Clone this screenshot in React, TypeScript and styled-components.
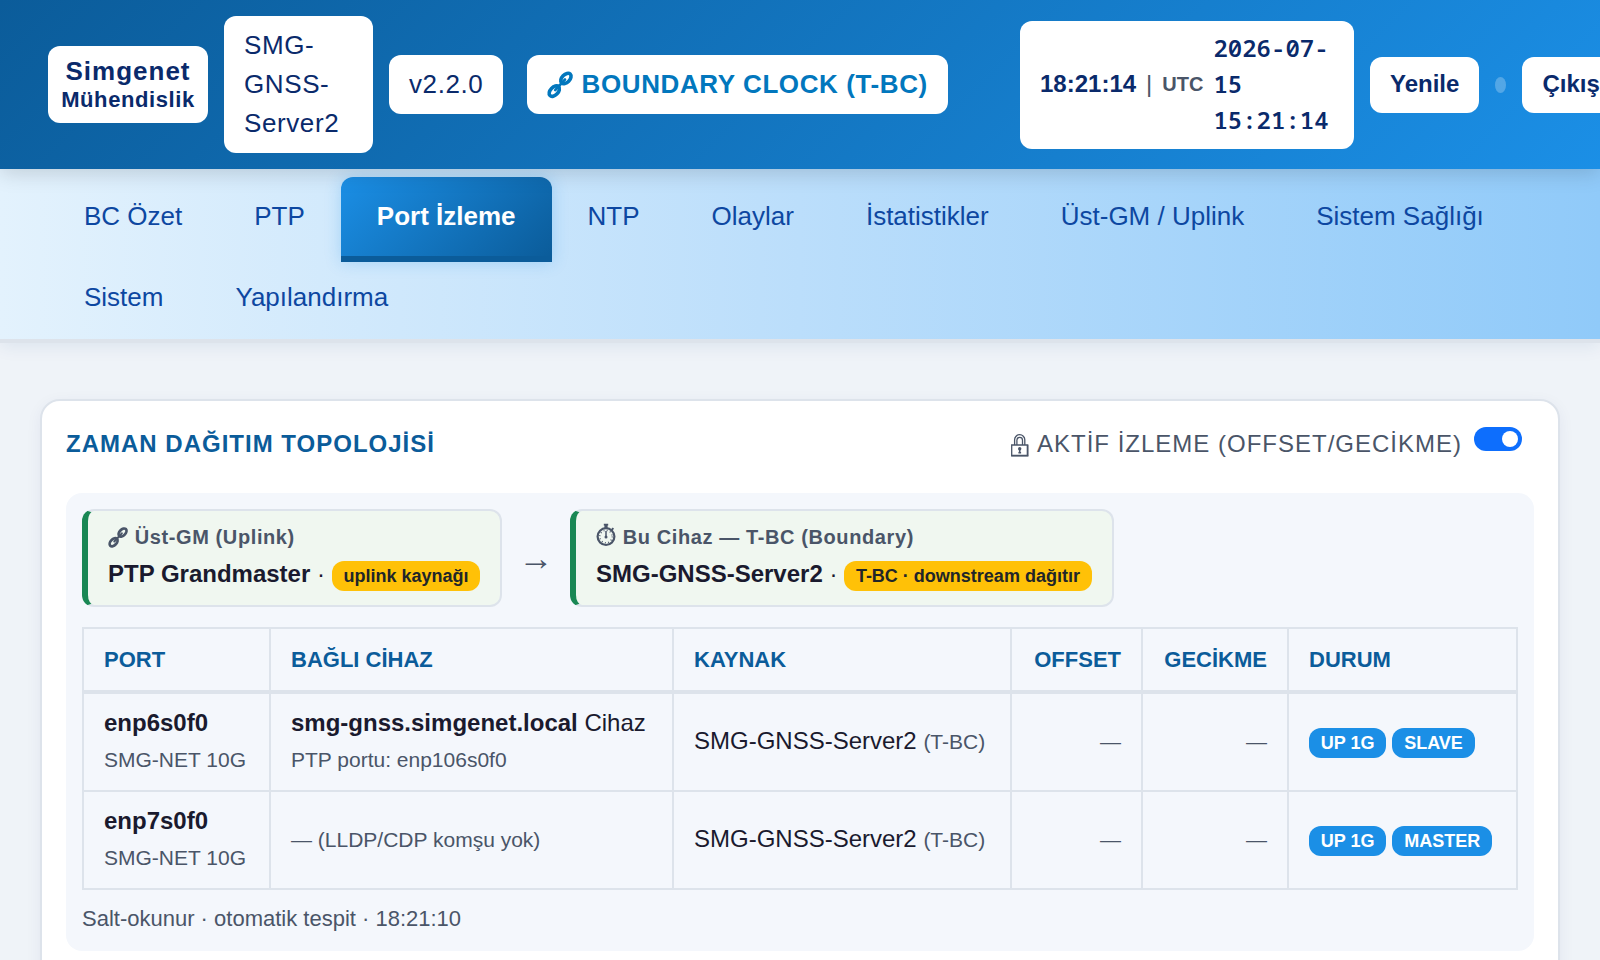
import React from "react";
import styled, { createGlobalStyle, css } from "styled-components";

const Global = createGlobalStyle`
  *, *::before, *::after { box-sizing: border-box; }
  html, body { margin: 0; overflow: hidden; }
  body {
    background: #eff3f8;
    color: #1a1a2e;
    font-family: "Liberation Sans", Arial, sans-serif;
    font-size: 24px;
    line-height: 1.5;
    width: 1600px;
    height: 960px;
  }
`;

const Page = styled.div`
  width: 1600px;
  height: 960px;
  overflow: hidden;
`;

const Header = styled.header`
  position: relative;
  z-index: 2;
  display: flex;
  align-items: center;
  height: 169px;
  padding: 16px 48px;
  background: linear-gradient(135deg, #0b5c9a 0%, #1b8fe6 100%);
  box-shadow: 0 4px 20px rgba(0, 0, 0, 0.15);
`;

const Pill = styled.div<{ $w?: number; $ml?: number; $small?: boolean; $wrap?: boolean }>`
  flex: none;
  width: ${(p) => (p.$w ? `${p.$w}px` : "auto")};
  margin-left: ${(p) => p.$ml ?? 16}px;
  padding: ${(p) => (p.$small ? "9px 20px 11px" : "10px 20px")};
  border-radius: 12px;
  background: #fff;
  color: #0a2a6b;
  font-size: ${(p) => (p.$small ? 24 : 26)}px;
  font-weight: ${(p) => (p.$small ? 700 : 400)};
  letter-spacing: ${(p) => (p.$small ? 0 : 0.6)}px;
  white-space: ${(p) => (p.$wrap ? "normal" : "nowrap")};
`;

const Brand = styled.div`
  flex: none;
  width: 160px;
  height: 77px;
  padding: 11px 0 0;
  border-radius: 12px;
  background: #fff;
  color: #0a2a6b;
  font-weight: 700;
  letter-spacing: 1px;
  text-align: center;
  line-height: 29px;
  font-size: 26px;
`;

const BrandSub = styled.div`
  font-size: 22px;
  line-height: 27px;
  letter-spacing: 0.6px;
`;

const Mode = styled(Pill)`
  color: #0277bd;
  font-weight: 700;
`;

const Clock = styled(Pill)`
  display: flex;
  align-items: center;
`;

const Divider = styled.span`
  margin: 0 10px;
  font-weight: 400;
  color: #4a5568;
`;

const Zone = styled.span`
  margin-right: 10px;
  font-size: 20px;
  color: #4a5568;
`;

const Stamp = styled.span`
  font-family: "Noto Sans Mono", "Liberation Mono", monospace;
  font-weight: 600;
`;

const StatusDot = styled.span`
  flex: none;
  width: 11px;
  height: 16px;
  margin-left: 16px;
  border-radius: 50%;
  background: rgba(255, 255, 255, 0.25);
`;

const Nav = styled.nav`
  position: relative;
  z-index: 1;
  display: flex;
  flex-wrap: wrap;
  height: 174px;
  padding: 8px 48px 0;
  border-bottom: 4px solid #dde3eb;
  background: linear-gradient(90deg, #e3f2fd 0%, #bbdefb 50%, #90caf9 100%);
  background-clip: padding-box;
  box-shadow: 0 4px 16px rgba(10, 60, 130, 0.08);
`;

const Tab = styled.a<{ $active?: boolean }>`
  height: 85px;
  margin-bottom: -4px;
  padding: 20px 36px;
  border-bottom: 6px solid transparent;
  border-radius: 12px 12px 0 0;
  color: #0d47a1;
  font-size: 26px;
  white-space: nowrap;
  ${(p) =>
    p.$active &&
    css`
      background: linear-gradient(135deg, #1b8fe6 0%, #0b5c9a 100%);
      border-bottom-color: #0b5c9a;
      color: #fff;
      font-weight: 700;
      box-shadow: 0 0 16px rgba(27, 143, 230, 0.25);
    `}
`;

const Card = styled.section`
  height: 640px;
  margin: 56px 40px 0;
  padding: 24px;
  border: 2px solid #dde3eb;
  border-radius: 20px;
  background: #fff;
  box-shadow: 0 4px 16px rgba(10, 40, 100, 0.06);
`;

const CardHead = styled.div`
  display: flex;
  justify-content: space-between;
  height: 36px;
  margin-bottom: 32px;
  padding: 1px 12px 0 0;
  letter-spacing: 1px;
`;

const Title = styled.h2`
  margin: 0;
  color: #0b5c9a;
  font-size: 24px;
  font-weight: 700;
`;

const Monitor = styled.label`
  display: flex;
  color: #4a5568;
`;

const Switch = styled.span`
  display: flex;
  justify-content: flex-end;
  width: 48px;
  height: 24px;
  margin: 1px 0 0 12px;
  padding: 4px;
  border-radius: 12px;
  background: #0d6efd;

  &::after {
    content: "";
    width: 16px;
    height: 16px;
    border-radius: 50%;
    background: #fff;
  }
`;

const Panel = styled.div`
  height: 458px;
  padding: 16px;
  border-radius: 16px;
  background: #f4f7fc;
`;

const Chain = styled.div`
  display: flex;
  align-items: center;
  height: 98px;
  margin-bottom: 20px;
`;

const Node = styled.div<{ $w: number }>`
  width: ${(p) => p.$w}px;
  height: 98px;
  padding: 11px 20px;
  border: 2px solid #dde3eb;
  border-left: 6px solid #198754;
  border-radius: 12px;
  background: #f0f7f0;
  white-space: nowrap;
`;

const NodeLabel = styled.div`
  height: 30px;
  margin-bottom: 4px;
  color: #4a5568;
  font-size: 20px;
  font-weight: 700;
  letter-spacing: 0.6px;
`;

const Arrow = styled.div`
  width: 68px;
  text-align: center;
  color: #4a5568;
  font-size: 35px;
`;

const Badge = styled.span<{ $warn?: boolean }>`
  display: inline-block;
  margin-right: -0.6px;
  padding: 6px 11.8px;
  border-radius: 12px;
  background: ${(p) => (p.$warn ? "#ffc107" : "#1b8fe6")};
  color: ${(p) => (p.$warn ? "#212529" : "#fff")};
  font-size: 18px;
  font-weight: 700;
  line-height: 18px;
`;

const Table = styled.table`
  width: 1436px;
  border-collapse: collapse;
  table-layout: fixed;
`;

const Th = styled.th<{ $w: number; $right?: boolean }>`
  width: ${(p) => p.$w}px;
  padding: 14px 20px;
  border: 2px solid #dde3eb;
  border-bottom-width: 4px;
  color: #0b5c9a;
  font-size: 22px;
  text-align: ${(p) => (p.$right ? "right" : "left")};
`;

const Td = styled.td<{ $right?: boolean }>`
  padding: 11px 20px 13px;
  border: 2px solid #dde3eb;
  text-align: ${(p) => (p.$right ? "right" : "left")};
  vertical-align: middle;
  white-space: nowrap;
`;

const Muted = styled.small`
  color: #4a5568;
  font-size: 21px;
`;

const Foot = styled.div`
  margin-top: 12px;
  color: #4a5568;
  font-size: 22px;
`;

const Glyph = styled.svg<{ $drop?: number }>`
  width: 1em;
  height: 1.1em;
  margin: 0 0.03em ${(p) => -(p.$drop ?? 0.2)}em 0;
  vertical-align: baseline;
  overflow: visible;
`;

const LockGlyph = styled(Glyph)`
  width: 20px;
  height: 24px;
  margin: 7px 7px 0 0;
`;

const ChainIcon = () => (
  <Glyph viewBox="0 0 26 28" fill="none" stroke="currentColor" strokeWidth="3.6" strokeLinecap="round">
    <ellipse cx="7.3" cy="20.8" rx="6.2" ry="3.9" transform="rotate(-46 7.3 20.8)" />
    <ellipse cx="18.9" cy="8.2" rx="6.2" ry="3.9" transform="rotate(-46 18.9 8.2)" />
    <path d="M8.2 19.8 18 9.2" strokeWidth="2.6" />
  </Glyph>
);

const StopwatchIcon = () => (
  <Glyph viewBox="0 0 20 22" fill="none" stroke="currentColor" $drop={0.12}>
    <circle cx="10" cy="12.6" r="8.4" strokeWidth="2.2" />
    <circle cx="10" cy="12.6" r="6.2" strokeWidth="1.4" strokeDasharray="0.9 2.346" />
    <path d="M10 7v6" strokeWidth="1.5" />
    <circle cx="10" cy="13" r="1.5" fill="currentColor" stroke="none" />
    <path d="M10 4V1" strokeWidth="3.2" />
    <path d="M7.8 .7h4.4M15.6 6l1.8-1.8" strokeWidth="1.8" />
  </Glyph>
);

const LockIcon = () => (
  <LockGlyph viewBox="0 0 20 24" fill="none" stroke="currentColor">
    <path d="M4.6 12V6.8a5.1 5.1 0 0 1 10.2 0V12" strokeWidth="1.3" />
    <path d="M6.9 12V7.2a2.8 2.8 0 0 1 5.6 0V12" strokeWidth="1.3" />
    <path d="M1.7 12h16v10.5h-16z" strokeWidth="1.3" />
    <path d="M1.2 22.7h17.2M17.5 12v11" strokeWidth="1.6" />
    <circle cx="9.7" cy="15.8" r="1.7" fill="currentColor" stroke="none" />
    <path d="M9.7 16v3.9M8.4 19.8h2.7" strokeWidth="1.6" />
  </LockGlyph>
);

const tabs = [
  "BC Özet",
  "PTP",
  "Port İzleme",
  "NTP",
  "Olaylar",
  "İstatistikler",
  "Üst-GM / Uplink",
  "Sistem Sağlığı",
  "Sistem",
  "Yapılandırma",
];

const ports = [
  { port: "enp6s0f0", peer: "smg-gnss.simgenet.local", note: "PTP portu: enp106s0f0", role: "SLAVE" },
  { port: "enp7s0f0", peer: "", note: "— (LLDP/CDP komşu yok)", role: "MASTER" },
];

export default function App() {
  return (
    <Page>
      <Global />
      <Header>
        <Brand>
          Simgenet
          <BrandSub>Mühendislik</BrandSub>
        </Brand>
        <Pill $w={149} $wrap>SMG-GNSS-Server2</Pill>
        <Pill $w={114}>v2.2.0</Pill>
        <Mode $w={421} $ml={24}>
          <ChainIcon /> BOUNDARY CLOCK (T-BC)
        </Mode>
        <Clock $w={334} $ml={72} $small $wrap>
          18:21:14
          <Divider>|</Divider>
          <Zone>UTC</Zone>
          <Stamp>2026-07-15 15:21:14</Stamp>
        </Clock>
        <Pill $small>Yenile</Pill>
        <StatusDot />
        <Pill $small>Çıkış</Pill>
      </Header>
      <Nav>
        {tabs.map((t) => (
          <Tab key={t} $active={t === "Port İzleme"}>
            {t}
          </Tab>
        ))}
      </Nav>
      <Card>
        <CardHead>
          <Title>ZAMAN DAĞITIM TOPOLOJİSİ</Title>
          <Monitor>
            <LockIcon />
            AKTİF İZLEME (OFFSET/GECİKME)
            <Switch />
          </Monitor>
        </CardHead>
        <Panel>
          <Chain>
            <Node $w={420}>
              <NodeLabel>
                <ChainIcon /> Üst-GM (Uplink)
              </NodeLabel>
              <b>PTP Grandmaster</b> · <Badge $warn>uplink kaynağı</Badge>
            </Node>
            <Arrow>→</Arrow>
            <Node $w={544}>
              <NodeLabel>
                <StopwatchIcon /> Bu Cihaz — T-BC (Boundary)
              </NodeLabel>
              <b>SMG-GNSS-Server2</b> · <Badge $warn>T-BC · downstream dağıtır</Badge>
            </Node>
          </Chain>
          <Table>
            <thead>
              <tr>
                <Th $w={187}>PORT</Th>
                <Th $w={403}>BAĞLI CİHAZ</Th>
                <Th $w={338}>KAYNAK</Th>
                <Th $w={131} $right>OFFSET</Th>
                <Th $w={146} $right>GECİKME</Th>
                <Th $w={229}>DURUM</Th>
              </tr>
            </thead>
            <tbody>
              {ports.map((p) => (
                <tr key={p.port}>
                  <Td>
                    <b>{p.port}</b>
                    <br />
                    <Muted>SMG-NET 10G</Muted>
                  </Td>
                  <Td>
                    {p.peer && (
                      <>
                        <b>{p.peer}</b> Cihaz
                        <br />
                      </>
                    )}
                    <Muted>{p.note}</Muted>
                  </Td>
                  <Td>
                    SMG-GNSS-Server2 <Muted>(T-BC)</Muted>
                  </Td>
                  <Td $right>
                    <Muted>—</Muted>
                  </Td>
                  <Td $right>
                    <Muted>—</Muted>
                  </Td>
                  <Td>
                    <Badge>UP 1G</Badge> <Badge>{p.role}</Badge>
                  </Td>
                </tr>
              ))}
            </tbody>
          </Table>
          <Foot>Salt-okunur · otomatik tespit · 18:21:10</Foot>
        </Panel>
      </Card>
    </Page>
  );
}
